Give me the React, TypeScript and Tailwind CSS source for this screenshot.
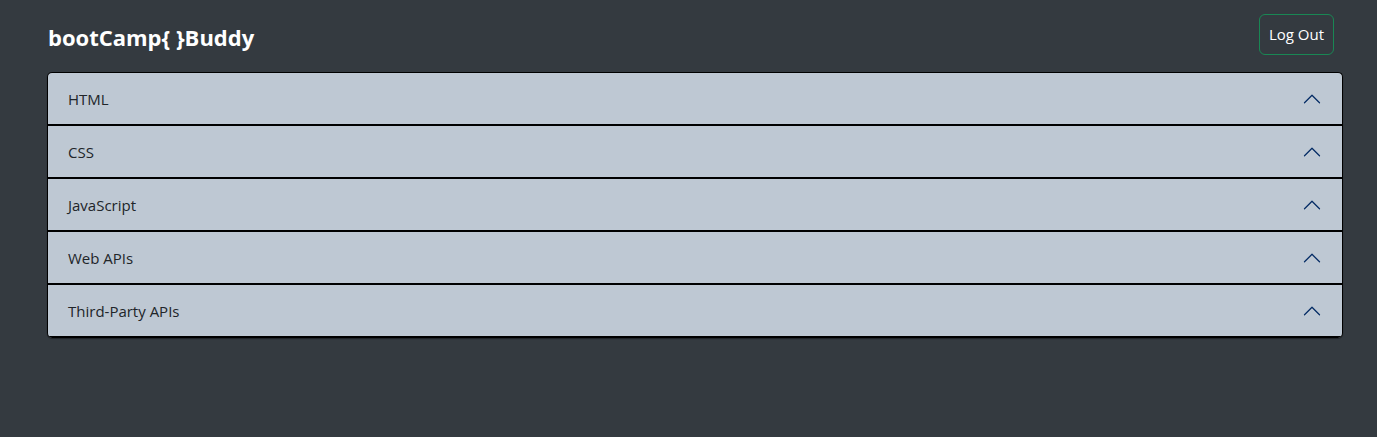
import React from "react";

const items = ["HTML", "CSS", "JavaScript", "Web APIs", "Third-Party APIs"];

function Chevron() {
  return (
    <svg width="20" height="20" viewBox="0 0 16 16" className="shrink-0">
      <path
        fill="none"
        stroke="#052c65"
        strokeWidth="1"
        strokeLinecap="round"
        strokeLinejoin="round"
        d="M2 11L8 5L14 11"
      />
    </svg>
  );
}

export default function App() {
  return (
    <div
      className="min-h-[437px] w-full bg-[#343a40] pt-[14px]"
      style={{ fontFamily: '"Open Sans", "Noto Sans", sans-serif' }}
    >
      <div className="flex h-[41px] items-start justify-between pl-[48px] pr-[43px]">
        <h1 className="text-[22px] font-bold leading-[46px] text-white">bootCamp{"{ }"}Buddy</h1>
        <button className="h-[41px] rounded-md border border-[#198754] px-[9px] text-[15px] text-white">
          Log Out
        </button>
      </div>
      <div className="ml-[47px] mr-[34px] mt-[17px] overflow-hidden rounded-[5px] border-x border-t border-black bg-[#bec8d3] shadow-[0_1px_1px_rgba(0,0,0,0.4)]">
        {items.map((t) => (
          <div
            key={t}
            className="flex h-[53px] items-center justify-between border-b-2 border-black pl-[20px] pr-[20px]"
          >
            <span className="pt-[1px] text-[15px] text-[#212529]">{t}</span>
            <Chevron />
          </div>
        ))}
      </div>
    </div>
  );
}
